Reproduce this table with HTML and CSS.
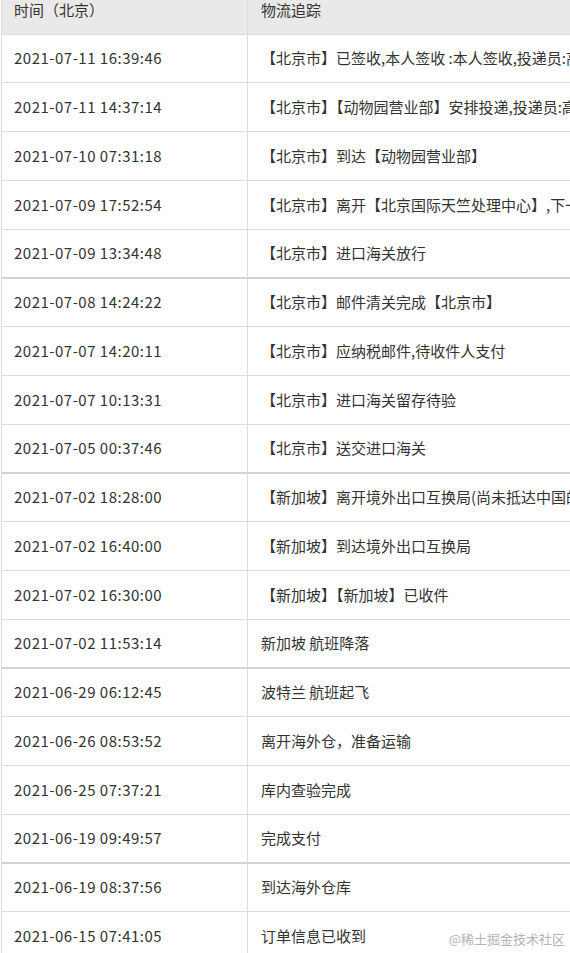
FILE: index.html
```html
<!DOCTYPE html>
<html lang="zh-CN">
<head>
<meta charset="utf-8">
<link rel="stylesheet" href="styles.css">
</head>
<body>
<div class="page">
  <table class="track">
    <thead>
      <tr><th class="c-time">时间（北京）</th><th class="c-info">物流追踪</th></tr>
    </thead>
    <tbody>
      <tr><td>2021-07-11 16:39:46</td><td>【北京市】已签收,本人签收 :本人签收,投递员:高</td></tr>
      <tr><td>2021-07-11 14:37:14</td><td>【北京市】【动物园营业部】安排投递,投递员:高</td></tr>
      <tr><td>2021-07-10 07:31:18</td><td>【北京市】到达【动物园营业部】</td></tr>
      <tr><td>2021-07-09 17:52:54</td><td>【北京市】离开【北京国际天竺处理中心】,下一站</td></tr>
      <tr class="thick"><td>2021-07-09 13:34:48</td><td>【北京市】进口海关放行</td></tr>
      <tr><td>2021-07-08 14:24:22</td><td>【北京市】邮件清关完成【北京市】</td></tr>
      <tr><td>2021-07-07 14:20:11</td><td>【北京市】应纳税邮件,待收件人支付</td></tr>
      <tr><td>2021-07-07 10:13:31</td><td>【北京市】进口海关留存待验</td></tr>
      <tr class="thick"><td>2021-07-05 00:37:46</td><td>【北京市】送交进口海关</td></tr>
      <tr><td>2021-07-02 18:28:00</td><td>【新加坡】离开境外出口互换局(尚未抵达中国的</td></tr>
      <tr><td>2021-07-02 16:40:00</td><td>【新加坡】到达境外出口互换局</td></tr>
      <tr><td>2021-07-02 16:30:00</td><td>【新加坡】【新加坡】已收件</td></tr>
      <tr class="thick"><td>2021-07-02 11:53:14</td><td>新加坡 航班降落</td></tr>
      <tr><td>2021-06-29 06:12:45</td><td>波特兰 航班起飞</td></tr>
      <tr><td>2021-06-26 08:53:52</td><td>离开海外仓，准备运输</td></tr>
      <tr><td>2021-06-25 07:37:21</td><td>库内查验完成</td></tr>
      <tr class="thick"><td>2021-06-19 09:49:57</td><td>完成支付</td></tr>
      <tr><td>2021-06-19 08:37:56</td><td>到达海外仓库</td></tr>
      <tr><td>2021-06-15 07:41:05</td><td>订单信息已收到</td></tr>
    </tbody>
  </table>
  <div class="mark">@稀土掘金技术社区</div>
</div>
</body>
</html>
```
FILE: styles.css
```css
html, body {
  margin: 0;
  padding: 0;
  background: #ffffff;
}
.page {
  width: 570px;
  height: 953px;
  overflow: hidden;
  position: relative;
  font-family: "Noto Sans CJK SC", "Noto Sans", sans-serif;
  color: #333333;
}
.track {
  border-collapse: collapse;
  table-layout: fixed;
  width: 800px;
  margin-left: 1px;
  font-size: 15px;
}
.track th,
.track td {
  box-sizing: border-box;
}
.c-time { width: 246px; }
.track th {
  background: #e9e9e9;
  font-weight: normal;
  text-align: left;
  height: 34px;
  padding: 0 13px;
  line-height: 20px;
  vertical-align: top;
  border-left: 1px solid #dcdcdc;
  border-bottom: 1px solid #dcdcdc;
}
.track th.c-time { padding-left: 12px; }
.track td {
  height: 48.75px;
  padding: 0 13px;
  line-height: 20px;
  vertical-align: middle;
  white-space: nowrap;
  overflow: hidden;
  border-left: 1px solid #dcdcdc;
  border-bottom: 1px solid #dcdcdc;
}
.track td:first-child {
  padding-left: 12px;
  letter-spacing: 0.5px;
}
.track tr.thick td { border-bottom: 2px solid #d4d4d4; }
.mark {
  position: absolute;
  right: 5px;
  bottom: 5px;
  font-size: 13px;
  color: #b4b4b4;
  font-family: "Noto Sans CJK SC", serif;
}
```
